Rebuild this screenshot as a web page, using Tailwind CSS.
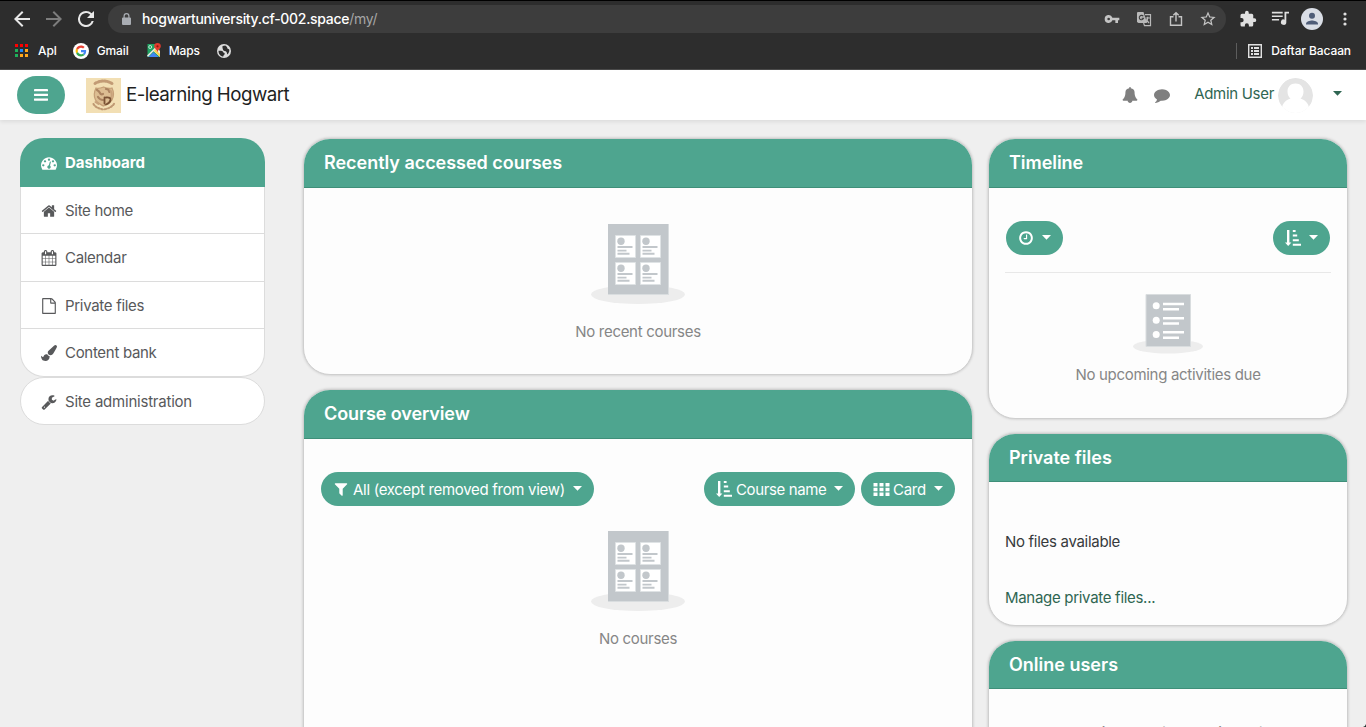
<!DOCTYPE html>
<html lang="id">
<head>
<meta charset="utf-8">
<title>Dashboard</title>
<script src="https://cdn.jsdelivr.net/npm/@tailwindcss/browser@4"></script>
</head>
<body class="relative flex h-[727px] w-[1366px] flex-col overflow-hidden bg-[#efefef] font-['Inter',sans-serif] text-[15px] leading-[22px] tracking-[-0.3px] text-[#373a3c]">

<svg class="hidden">
  <symbol id="caret" viewBox="0 0 9 5"><path d="M0 0h9L4.5 4.8z"/></symbol>
  <symbol id="sort" viewBox="0 0 16 16"><path d="M2 0h2.4v12.4h2L3.2 16 0 12.4h2zM7.8 0h2.8v2H7.8zM7.8 4.6h4.4v2H7.8zM7.8 9.2h6v2h-6zM7.8 13.8H16v2H7.8z"/></symbol>
  <symbol id="tile" viewBox="0 0 21 23"><path fill="#fff" stroke="#dfe3e5" d="M.5.5h20v22H.5z"/><circle cx="6" cy="6.300" r="3.700" fill="#c2c7cb"/><path fill="#c2c7cb" d="M2.500 11h15v2h-15zM2.500 14.700h9v1.800h-9zM2.500 17.800h12v2h-12z"/></symbol>
  <symbol id="courses" viewBox="0 0 94 80"><ellipse cx="47" cy="70.500" rx="47" ry="9.500" fill="#ededed"/><path fill="#c2c7cb" d="M17 0h60.500v70.500H17z"/><path stroke="#d9dddf" d="M17 70.500h61M77.500 0v71"/><use href="#tile" x="24" y="11" width="21" height="23"/><use href="#tile" x="49" y="11" width="21" height="23"/><use href="#tile" x="24" y="38" width="21" height="23"/><use href="#tile" x="49" y="38" width="21" height="23"/></symbol>
</svg>

<!-- Browser toolbar -->
<div class="flex h-[70px] shrink-0 flex-col border-t border-b border-t-black border-b-[#4b4b4b] bg-[#2d2d2d] text-[12px] font-medium tracking-[-0.1px] text-white">
  <div class="flex h-[36px] items-center pl-[14px]">
    <svg class="size-4 shrink-0" viewBox="4 4 16 16" fill="#e8e8e8"><path d="M20 11H7.830l5.590-5.590L12 4l-8 8 8 8 1.410-1.410L7.830 13H20z"/></svg>
    <svg class="ml-4 size-4 shrink-0" viewBox="4 4 16 16" fill="#7d7d7d"><path d="M12 4l-1.410 1.410L16.170 11H4v2h12.170l-5.580 5.590L12 20l8-8z"/></svg>
    <svg class="ml-4 size-4 shrink-0" viewBox="4 4 16 16" fill="#e8e8e8"><path d="M17.650 6.350A7.960 7.960 0 0 0 12 4a8 8 0 1 0 7.730 10h-2.080A6 6 0 1 1 12 6c1.660 0 3.140.690 4.220 1.780L13 11h7V4z"/></svg>
    <div class="ml-[14px] flex h-7 w-[1118px] items-center rounded-full bg-[#3d3d3d] pl-[14px]">
      <svg class="h-3 w-[9px]" viewBox="0 0 9 12" fill="#a9adb3"><path d="M1.500 4.500V3a3 3 0 0 1 6 0v1.500H8a1 1 0 0 1 1 1V11a1 1 0 0 1-1 1H1a1 1 0 0 1-1-1V5.500a1 1 0 0 1 1-1zM2.700 4.500h3.600V3a1.800 1.800 0 0 0-3.600 0z"/></svg>
      <span class="ml-[11px] text-[14px] tracking-[-0.3px] whitespace-nowrap">hogwartuniversity.cf-002.space</span><span class="text-[14px] font-normal tracking-[-0.3px] text-[#a5a5a5]">/my/</span>
      <div class="ml-auto flex items-center pr-[10px]">
        <svg class="mr-4 h-4 w-4" viewBox="0 0 24 24" fill="#c4c4c4"><path d="M12.650 10A6 6 0 0 0 1 12a6 6 0 0 0 11.650 2H17v4h4v-4h2v-4zM7 14a2 2 0 1 1 0-4 2 2 0 0 1 0 4z"/></svg>
        <svg class="mr-4 size-4" viewBox="0 0 16 16"><path fill="#b9b9b9" d="M1.500 1h6l3.500 11H2.500L1 11V2z"/><path fill="none" stroke="#b9b9b9" stroke-width="1.200" d="M9 3.600h5.500v11H8.500L7.600 12M9.500 7h4.500M11.700 5.800V7c0 2-1.200 3.700-2.300 4.500M10 8.500l3 3.500"/><path fill="none" stroke="#3d3d3d" stroke-width="1.100" d="M7.300 5.300A2.200 2.200 0 1 0 7.600 7.200H5.600"/></svg>
        <svg class="mr-4 size-4" viewBox="0 0 16 16" fill="none" stroke="#c4c4c4" stroke-width="1.400"><path d="M5.500 5.800h-3v8.500h11V5.800h-3M8 10.500V1.800M5.300 4.300L8 1.700l2.700 2.600"/></svg>
        <svg class="size-4" viewBox="1.500 1.500 21 21" fill="#c4c4c4"><path d="M22 9.240l-7.190-.62L12 2 9.190 8.630 2 9.240l5.460 4.730L5.820 21 12 17.270 18.180 21l-1.630-7.030zM12 15.400l-3.760 2.270 1-4.280-3.320-2.880 4.380-.38L12 6.100l1.710 4.040 4.380.38-3.320 2.880 1 4.280z"/></svg>
      </div>
    </div>
    <svg class="ml-[13px] size-[18px] shrink-0" viewBox="0 0 24 24" fill="#e0e0e0"><path d="M20.500 11H19V7a2 2 0 0 0-2-2h-4V3.500a2.500 2.500 0 0 0-5 0V5H4a2 2 0 0 0-2 2v3.800h1.500a2.700 2.700 0 0 1 0 5.400H2V20a2 2 0 0 0 2 2h3.800v-1.500a2.700 2.700 0 0 1 5.400 0V22H17a2 2 0 0 0 2-2v-4h1.500a2.500 2.500 0 0 0 0-5z"/></svg>
    <svg class="ml-[14px] size-[18px] shrink-0" viewBox="2 3 20 20" fill="#e0e0e0"><path d="M3 5h12v1.800H3zM3 9h12v1.800H3zM3 13h8v1.800H3zM17 5h5v2h-3v9.500a3 3 0 1 1-2-2.800z"/></svg>
    <svg class="ml-3 size-[22px] shrink-0" viewBox="0 0 22 22"><circle cx="11" cy="11" r="11" fill="#dadee6"/><circle cx="11" cy="7.800" r="3" fill="#4f5d78"/><path fill="#4f5d78" d="M5 16.500v-1c0-2 4-3.100 6-3.100s6 1.100 6 3.100v1z"/></svg>
    <svg class="ml-[20px] h-[14px] w-1 shrink-0" viewBox="0 0 4 14" fill="#e0e0e0"><circle cx="2" cy="2" r="1.600"/><circle cx="2" cy="7" r="1.600"/><circle cx="2" cy="12" r="1.600"/></svg>
  </div>
  <div class="flex h-[27px] items-center pl-[15px]">
    <svg class="h-[14px] w-[13px]" viewBox="0 0 13 14"><path fill="#f00" d="M0 0h3v3H0zM5 0h3v3H5zM10 0h3v3h-3z"/><path fill="#1eb05a" d="M0 5h3v3H0z"/><path fill="#1a8cff" d="M5 5h3v3H5z"/><path fill="#ffa81c" d="M10 5h3v3h-3zM5 10h3v3H5zM10 10h3v3h-3z"/><path fill="#1eb05a" d="M0 10h3v3H0z"/></svg>
    <span class="ml-[10px]">Apl</span>
    <svg class="ml-[16px] size-4" viewBox="0 0 16 16"><circle cx="8" cy="8" r="8" fill="#fff"/><g transform="translate(2.600 2.600) scale(.225)"><path fill="#ea4335" d="M24 9.500c3.540 0 6.710 1.220 9.210 3.600l6.850-6.850C35.900 2.380 30.470 0 24 0 14.620 0 6.510 5.380 2.560 13.220l7.980 6.190C12.430 13.720 17.740 9.500 24 9.500z"/><path fill="#4285f4" d="M46.980 24.550c0-1.570-.15-3.090-.38-4.550H24v9.020h12.940c-.58 2.960-2.260 5.480-4.780 7.180l7.730 6c4.510-4.180 7.090-10.360 7.090-17.650z"/><path fill="#fbbc05" d="M10.530 28.590c-.48-1.450-.76-2.990-.76-4.590s.27-3.140.76-4.590l-7.980-6.190A23.900 23.900 0 0 0 0 24c0 3.880.92 7.540 2.560 10.780z"/><path fill="#34a853" d="M24 48c6.480 0 11.930-2.130 15.890-5.810l-7.730-6c-2.150 1.450-4.920 2.300-8.160 2.300-6.260 0-11.570-4.220-13.470-9.910l-7.980 6.190C6.510 42.620 14.620 48 24 48z"/></g></svg>
    <span class="ml-2">Gmail</span>
    <svg class="ml-[17px] size-[15px]" viewBox="0 0 15 15"><path fill="#1fa463" d="M1.500 1h12v13h-12z"/><path fill="#e8e8e8" d="M1 12.500L10 3.800 14 8v6L7.500 8.300 2 14z"/><path fill="#fbd34b" d="M9 6l5 5v3l-6-6z"/><path fill="#4285f4" d="M7.500 9.200l5 4.800h-10z"/><circle cx="4.200" cy="4" r="1.500" fill="none" stroke="#fff" stroke-width=".7"/><path fill="#e33b2e" d="M11.500 0A3.300 3.300 0 0 1 14.800 3.300c0 2.300-2.600 3-3.300 6-.7-3-3.300-3.700-3.300-6A3.300 3.300 0 0 1 11.500 0z"/><circle cx="11.500" cy="3.300" r="1.100" fill="#8c1a12"/></svg>
    <span class="ml-2">Maps</span>
    <svg class="ml-[17px] size-[14px]" viewBox="2 2 20 20"><circle cx="12" cy="12" r="10" fill="#dcdcdc"/><path fill="#2d2d2d" d="M4.200 11.500c3 0 5.800-.3 6.300 1.500s2.500 1 2.500 3-2 1.500-2 4C7 19.500 4 16 4.200 11.500zM10 5l4-.8c.5 1.500 2.500 1.300 2.500 2.800S18 9 19.500 10c.6 3-1 5.500-2.500 7-1-1-.5-3.500-2.500-4.500S11 12 10.500 10s-1-3-.5-5z"/></svg>
    <div class="ml-auto flex items-center pr-[15px]">
      <div class="h-4 w-px bg-[#5d5d5d]"></div>
      <svg class="ml-[11px] size-[14px]" viewBox="0 0 14 14"><path fill="none" stroke="#e0e0e0" stroke-width="1.400" d="M.7.7h12.600v12.600H.7z"/><path fill="#e0e0e0" d="M3 3h2v2H3zM6 3h5v2H6zM3 6h2v2H3zM6 6h5v2H6zM3 9h2v2H3zM6 9h5v2H6z"/></svg>
      <span class="ml-[9px] whitespace-nowrap">Daftar Bacaan</span>
    </div>
  </div>
</div>

<!-- Site header -->
<header class="z-10 flex h-[50px] shrink-0 items-center bg-white pr-[24px] pl-[17px] shadow-[0_2px_4px_rgba(0,0,0,.08)]">
  <button class="flex h-[38px] w-12 items-center justify-center rounded-[19px] bg-[#4ea58f]"><svg class="h-3 w-[14px]" viewBox="0 0 14 12" fill="#fff"><rect width="14" height="2.300" rx=".4"/><rect y="4.700" width="14" height="2.300" rx=".4"/><rect y="9.400" width="14" height="2.300" rx=".4"/></svg></button>
  <svg class="ml-[21px] size-[35px]" viewBox="0 0 35 35"><path fill="#f2dfb4" d="M0 0h35v35H0z"/><g fill="none" stroke-linecap="round"><path stroke="#c29b75" stroke-width="3" stroke-dasharray="1.600 1.700" d="M9 5.500q8.500-5 17 0"/><path fill="#dcbd92" stroke="#c49e76" stroke-width="1.200" d="M10 10c3 1 5 0 7.500-1 2.500 1 5.500 2 8.500 1 2 4 2 8 0 12-2 3.500-5 4-8.500 6C14 26 11 25 9.500 22c-2-4-1.500-8 .5-12z"/><path stroke="#ab8360" stroke-width="2.200" d="M11 12q2 1 3 3t3 1M20 11q3 0 3.500 3M12 19q2 3 5 3"/><path stroke="#c8a27b" stroke-width="2" d="M9.500 24l3 2M24.500 12.500q2.500 5 0 8"/><path stroke="#7a5234" stroke-width="1.800" d="M18.500 19.500v6M20 19.500q5-.5 4.500 2.500T20 26.500"/><path stroke="#bf9973" stroke-width="2" stroke-dasharray="1.500 1.700" d="M7.500 26q2 4 10 5.500Q26 30 28.500 25"/></g></svg>
  <span class="ml-[5px] text-[18.75px] leading-6 tracking-[-0.55px] whitespace-nowrap text-[#1f1f1f]">E-learning Hogwart</span>
  <div class="ml-auto flex items-center">
    <svg class="size-4" viewBox="0 0 1792 1792" fill="#7f7f7f"><path d="M1728 1408q0 52-38 90t-90 38h-448q0 106-75 181t-181 75-181-75-75-181h-448q-52 0-90-38t-38-90q50-42 91-88t85-119.500 74.500-158.500 50-206 19.500-260q0-152 117-282.500t307-158.500q-8-19-8-39 0-40 28-68t68-28 68 28 28 68q0 20-8 39 190 28 307 158.500t117 282.500q0 139 19.500 260t50 206 74.500 158.500 85 119.500 91 88z"/></svg>
    <svg class="ml-4 size-4" viewBox="0 0 1792 1792" fill="#7f7f7f"><path d="M1792 896q0 174-120 321.500t-326 233-450 85.500q-70 0-145-8-198 175-460 242-49 14-114 22-17 2-30.500-9t-17.500-29v-1q-3-4-.5-12t2-10 4.500-9.500l6-9 7-8.500 8-9q7-8 31-34.500t34.500-38 31-39.500 32.500-51 27-59 26-76q-157-89-247.500-220t-90.500-281q0-130 71-248.500t191-204.500 286-136.500 348-50.500q244 0 450 85.500t326 233 120 321.500z"/></svg>
    <span class="mb-[2px] ml-6 whitespace-nowrap text-[#2f6652]">Admin User</span>
    <svg class="ml-1 size-[35px] rounded-full" viewBox="0 0 35 35"><circle cx="17.500" cy="17.500" r="17.500" fill="#e4e4e4"/><path fill="#fff" d="M17.500 5.500c5 0 8 3.500 8 8 0 3-1 5.500-3 7 5 1.500 8 5 8.500 9.500V35H4v-5c.5-4.500 3.500-8 8.500-9.500-2-1.500-3-4-3-7 0-4.500 3-8 8-8z"/></svg>
    <svg class="mt-[-4px] ml-5 h-[5px] w-[9px]" fill="#2f6652"><use href="#caret"/></svg>
  </div>
</header>

<div class="flex min-h-0 flex-1 pl-5">
  <!-- Navigation drawer -->
  <nav class="mt-[18px] w-[245px] shrink-0 text-[#58595b]">
    <div class="flex h-[49px] items-center rounded-t-[24px] bg-[#4ea58f] pl-[21px] font-bold tracking-normal text-white">
      <svg class="size-4" viewBox="0 0 1792 1792" fill="#fff"><path d="M384 1152q0-53-37.500-90.500t-90.500-37.500-90.500 37.500-37.500 90.500 37.500 90.500 90.500 37.500 90.500-37.500 37.500-90.500zm192-448q0-53-37.500-90.500t-90.500-37.500-90.500 37.500-37.500 90.500 37.500 90.500 90.500 37.500 90.500-37.500 37.500-90.500zm428 481l101-382q6-26-7.500-48.500t-38.500-29.500-48 6.500-30 39.500l-101 382q-60 5-107 43.500t-63 98.500q-20 77 20 146t117 89 146-20 89-117q16-60-6-117t-72-91zm660-33q0-53-37.500-90.500t-90.500-37.500-90.500 37.500-37.500 90.500 37.500 90.500 90.500 37.500 90.500-37.500 37.500-90.500zm-640-640q0-53-37.500-90.500t-90.500-37.500-90.500 37.500-37.500 90.500 37.500 90.500 90.500 37.500 90.500-37.500 37.500-90.500zm448 192q0-53-37.500-90.500t-90.500-37.500-90.500 37.500-37.500 90.500 37.500 90.500 90.500 37.500 90.500-37.500 37.500-90.500zm320 448q0 261-141 483-19 29-54 29h-1402q-35 0-54-29-141-221-141-483 0-182 71-348t191-286 286-191 348-71 348 71 286 191 191 286 71 348z"/></svg>
      <span class="ml-2">Dashboard</span>
    </div>
    <div class="flex h-[47px] items-center border-x border-b border-[#dcdcdc] bg-white pt-px pl-5">
      <svg class="size-4" viewBox="0 0 1792 1792" fill="#58595b"><path d="M1472 992v480q0 26-19 45t-45 19h-384v-384h-256v384h-384q-26 0-45-19t-19-45v-480q0-1 .5-3t.5-3l575-474 575 474q1 2 1 6zm223-69l-62 74q-8 9-21 11h-3q-13 0-21-7l-692-577-692 577q-12 8-24 7-13-2-21-11l-62-74q-8-10-7-23.500t11-21.500l719-599q32-26 76-26t76 26l244 204v-195q0-14 9-23t23-9h192q14 0 23 9t9 23v408l219 182q10 8 11 21.500t-7 23.500z"/></svg>
      <span class="ml-2">Site home</span>
    </div>
    <div class="flex h-[48px] items-center border-x border-b border-[#dcdcdc] bg-white pl-5">
      <svg class="size-4" viewBox="0 0 1792 1792" fill="#58595b"><path d="M192 1664h288v-288h-288v288zm352 0h320v-288h-320v288zm-352-352h288v-320h-288v320zm352 0h320v-320h-320v320zm-352-384h288v-288h-288v288zm736 736h320v-288h-320v288zm-384-736h320v-288h-320v288zm768 736h288v-288h-288v288zm-384-352h320v-320h-320v320zm-352-864v-288q0-13-9.500-22.500t-22.500-9.500h-64q-13 0-22.500 9.500t-9.500 22.500v288q0 13 9.500 22.500t22.500 9.500h64q13 0 22.500-9.500t9.500-22.500zm736 864h288v-320h-288v320zm-384-384h320v-288h-320v288zm384 0h288v-288h-288v288zm32-480v-288q0-13-9.500-22.500t-22.500-9.500h-64q-13 0-22.500 9.500t-9.500 22.500v288q0 13 9.500 22.500t22.500 9.500h64q13 0 22.500-9.500t9.500-22.500zm384-64v1280q0 52-38 90t-90 38h-1408q-52 0-90-38t-38-90v-1280q0-52 38-90t90-38h128v-96q0-66 47-113t113-47h64q66 0 113 47t47 113v96h384v-96q0-66 47-113t113-47h64q66 0 113 47t47 113v96h128q52 0 90 38t38 90z"/></svg>
      <span class="ml-2">Calendar</span>
    </div>
    <div class="flex h-[47px] items-center border-x border-b border-[#dcdcdc] bg-white pt-px pl-5">
      <svg class="size-4" viewBox="0 0 1792 1792" fill="#58595b"><path d="M1596 380q28 28 48 76t20 88v1152q0 40-28 68t-68 28h-1344q-40 0-68-28t-28-68v-1600q0-40 28-68t68-28h896q40 0 88 20t76 48zm-444-244v376h376q-10-29-22-41l-313-313q-12-12-41-22zm384 1528v-1024h-416q-40 0-68-28t-28-68v-416h-768v1536h1280z"/></svg>
      <span class="ml-2">Private files</span>
    </div>
    <div class="flex h-[48px] items-center rounded-b-[24px] border-x border-b border-[#dcdcdc] bg-white pl-5">
      <svg class="size-4" viewBox="0 0 1792 1792" fill="#58595b"><path d="M1615 0q70 0 122.500 46.500t52.500 116.500q0 63-45 151-332 629-465 752-97 91-218 91-126 0-216.500-92.500t-90.500-219.500q0-128 92-212l638-579q59-54 130-54zm-909 1034q39 76 106.500 130t150.500 76l1 71q4 213-129.500 347t-348.500 134q-123 0-218-46.500t-152.500-127.500-86.500-183-29-220q7 5 41 30t62 44.500 59 36.500 46 17q41 0 55-37 25-66 57.500-112.500t69.500-76 88-47.500 103-25.500 125-10.500z"/></svg>
      <span class="ml-2">Content bank</span>
    </div>
    <div class="flex h-[48px] items-center rounded-[24px] border border-[#dcdcdc] bg-white pt-px pl-5">
      <svg class="size-4" viewBox="0 0 1792 1792" fill="#58595b"><path d="M448 1472q0-26-19-45t-45-19-45 19-19 45 19 45 45 19 45-19 19-45zm644-420l-682 682q-37 37-90 37-52 0-91-37l-106-108q-38-36-38-90 0-53 38-91l681-681q39 98 114.500 173.500t173.500 114.500zm634-435q0 39-23 106-47 134-164.500 217.500t-258.500 83.500q-185 0-316.500-131.500t-131.500-316.500 131.500-316.500 316.500-131.500q58 0 121.500 16.500t107.500 46.500q16 11 16 28t-16 28l-293 169v224l193 107q5-3 79-48.500t135.500-81 70.500-35.500q15 0 23.500 10t8.500 25z"/></svg>
      <span class="ml-2 tracking-[-0.22px]">Site administration</span>
    </div>
  </nav>

  <!-- Main blocks -->
  <main class="mt-[18px] ml-[38px] flex w-[670px] shrink-0 flex-col gap-[14px]">
    <section class="h-[237px] shrink-0 overflow-hidden rounded-[27px] border border-[#cfcfcf] bg-[#fdfdfd] shadow-[0_0_3px_rgba(0,0,0,.2)]">
      <h2 class="flex h-[49px] items-center border-b border-[#3f8f79] bg-[#4ea58f] pl-5 text-[18px] font-semibold tracking-[-0.03px] text-white">Recently accessed courses</h2>
      <div class="flex flex-col items-center pt-9 text-[#868686]">
        <svg class="h-20 w-[94px]"><use href="#courses"/></svg>
        <p class="mt-[17px]">No recent courses</p>
      </div>
    </section>
    <section class="h-[400px] shrink-0 overflow-hidden rounded-[27px] border border-[#cfcfcf] bg-[#fdfdfd] shadow-[0_0_3px_rgba(0,0,0,.2)]">
      <h2 class="flex h-[49px] items-center border-b border-[#3f8f79] bg-[#4ea58f] pl-5 text-[18px] font-semibold tracking-[-0.1px] text-white">Course overview</h2>
      <div class="mt-[33px] flex px-[17px] text-white">
        <button class="flex h-[34px] w-[273px] items-center rounded-full bg-[#4ea58f] pl-3 whitespace-nowrap"><svg class="size-4" viewBox="0 0 1792 1792" fill="#fff"><path d="M1595 295q17 41-14 70l-493 493v742q0 42-39 59-13 5-25 5-27 0-45-19l-256-256q-19-19-19-45v-486l-493-493q-31-29-14-70 17-39 59-39h1280q42 0 59 39z"/></svg><span class="mt-[2px] ml-1">All (except removed from view)</span><svg class="mt-[-1px] ml-2 h-[5px] w-[9px]" fill="#fff"><use href="#caret"/></svg></button>
        <button class="ml-auto flex h-[34px] w-[151px] items-center rounded-full bg-[#4ea58f] pl-3 whitespace-nowrap"><svg class="size-4" fill="#fff"><use href="#sort"/></svg><span class="mt-[2px] ml-1 tracking-[-0.38px]">Course name</span><svg class="mt-[-1px] ml-2 h-[5px] w-[9px]" fill="#fff"><use href="#caret"/></svg></button>
        <button class="ml-[6px] flex h-[34px] w-[94px] items-center rounded-full bg-[#4ea58f] pl-3 whitespace-nowrap"><svg class="h-[13px] w-[17px]" viewBox="0 0 17 13" fill="#fff"><path d="M.5 0h4v3.500h-4zM6.500 0h4v3.500h-4zM12.500 0h4v3.500h-4zM.5 4.700h4v3.500h-4zM6.500 4.700h4v3.500h-4zM12.500 4.700h4v3.500h-4zM.5 9.400h4v3.500h-4zM6.500 9.400h4v3.500h-4zM12.500 9.400h4v3.500h-4z"/></svg><span class="mt-[2px] ml-[3px]">Card</span><svg class="mt-[-1px] ml-2 h-[5px] w-[9px]" fill="#fff"><use href="#caret"/></svg></button>
      </div>
      <div class="flex flex-col items-center pt-[25px] text-[#868686]">
        <svg class="h-20 w-[94px]"><use href="#courses"/></svg>
        <p class="mt-[17px]">No courses</p>
      </div>
    </section>
  </main>

  <!-- Side blocks -->
  <aside class="mt-[18px] ml-[15px] flex w-[360px] shrink-0 flex-col gap-[14px]">
    <section class="h-[281px] shrink-0 overflow-hidden rounded-[27px] border border-[#cfcfcf] bg-[#fdfdfd] shadow-[0_0_3px_rgba(0,0,0,.2)]">
      <h2 class="flex h-[49px] items-center border-b border-[#3f8f79] bg-[#4ea58f] pl-5 text-[18px] font-semibold tracking-[-0.05px] text-white">Timeline</h2>
      <div class="mx-4 mt-[33px] flex h-[52px] items-start justify-between border-b border-[#e8e8e8] px-px">
        <button class="flex h-[34px] w-[57px] items-center rounded-full bg-[#4ea58f] pl-3"><svg class="size-4" viewBox="0 0 1792 1792" fill="#fff"><path d="M1024 544v448q0 14-9 23t-23 9h-320q-14 0-23-9t-9-23v-64q0-14 9-23t23-9h224v-352q0-14 9-23t23-9h64q14 0 23 9t9 23zm416 352q0-148-73-273t-198-198-273-73-273 73-198 198-73 273 73 273 198 198 273 73 273-73 198-198 73-273zm224 0q0 209-103 385.500t-279.500 279.500-385.500 103-385.500-103-279.500-279.500-103-385.500 103-385.500 279.500-279.500 385.500-103 385.500 103 279.500 279.500 103 385.500z"/></svg><svg class="mt-[-1px] ml-2 h-[5px] w-[9px]" fill="#fff"><use href="#caret"/></svg></button>
        <button class="flex h-[34px] w-[57px] items-center rounded-full bg-[#4ea58f] pl-3"><svg class="size-4" fill="#fff"><use href="#sort"/></svg><svg class="mt-[-1px] ml-2 h-[5px] w-[9px]" fill="#fff"><use href="#caret"/></svg></button>
      </div>
      <div class="flex flex-col items-center pt-[21px] text-[#868686]">
        <svg class="h-[60px] w-[70px]" viewBox="0 0 70 60"><ellipse cx="35" cy="52.500" rx="35" ry="7" fill="#ededed"/><path fill="#c2c7cb" stroke="#d9dddf" d="M13 .5h44.500V52.500H13z"/><g fill="#fff"><circle cx="23.200" cy="11.700" r="3.500"/><circle cx="23.200" cy="26.300" r="3.500"/><circle cx="23.200" cy="40.500" r="3.500"/><path d="M30 8.700h21v2.600H30zM30 14h16v2.600H30zM30 23h21v2.600H30zM30 28.200h16v2.600H30zM30 37h21v2.600H30zM30 42.500h16v2.600H30z"/></g></svg>
        <p class="mt-[10px]">No upcoming activities due</p>
      </div>
    </section>
    <section class="h-[193px] shrink-0 overflow-hidden rounded-[27px] border border-[#cfcfcf] bg-[#fdfdfd] shadow-[0_0_3px_rgba(0,0,0,.2)]">
      <h2 class="flex h-12 items-center border-b border-[#3f8f79] bg-[#4ea58f] pl-5 text-[18px] font-semibold tracking-normal text-white">Private files</h2>
      <div class="px-4 pt-[49px]">
        <p>No files available</p>
        <p class="mt-[34px] text-[#2f6652]">Manage private files...</p>
      </div>
    </section>
    <section class="h-[180px] shrink-0 overflow-hidden rounded-[27px] border border-[#cfcfcf] bg-[#fdfdfd] shadow-[0_0_3px_rgba(0,0,0,.2)]">
      <h2 class="flex h-12 items-center border-b border-[#3f8f79] bg-[#4ea58f] pl-5 text-[18px] font-semibold tracking-normal text-white">Online users</h2>
      <p class="pt-[33px] text-center text-[#868686]">1 online user (last 5 minutes)</p>
    </section>
  </aside>
</div>
<svg class="absolute right-0 bottom-0 size-[3px]" viewBox="0 0 3 3"><path fill="#1c2b2b" d="M3 0v3H0q2.500-.5 3-3z"/></svg>
</body>
</html>
